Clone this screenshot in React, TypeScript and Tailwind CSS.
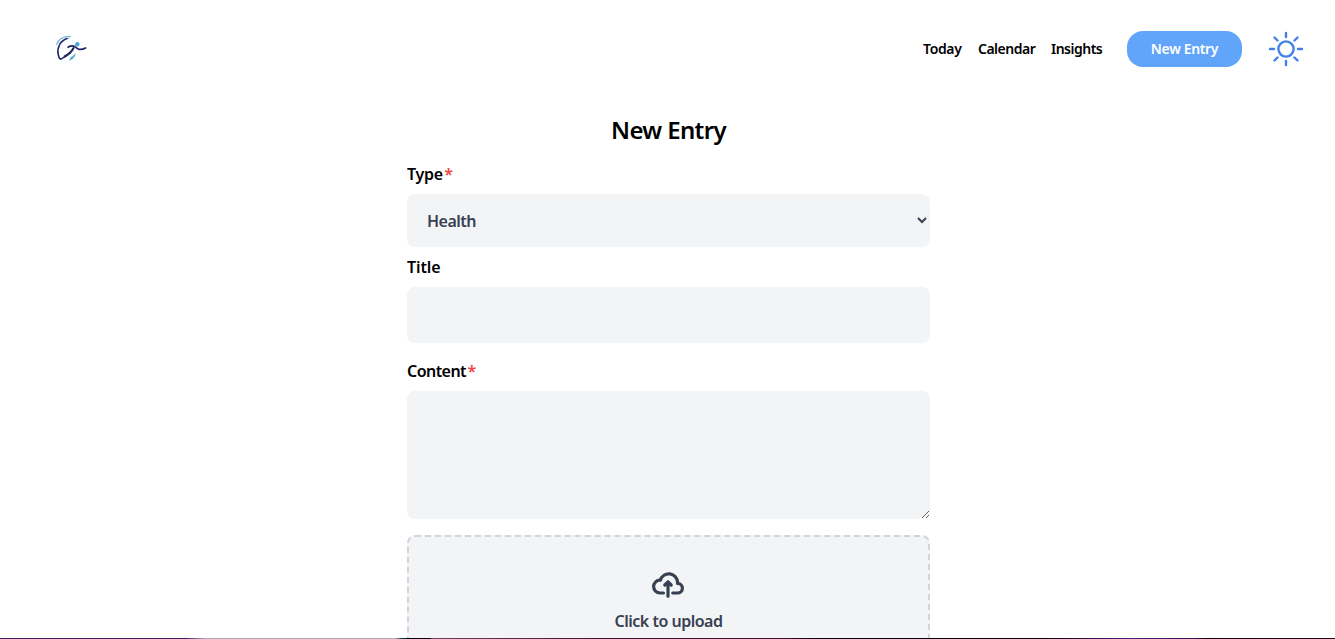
import React from "react";

function Logo() {
  return (
    <svg className="h-[30px] w-[32px]" viewBox="0 0 32 30" fill="none" strokeLinecap="round" strokeLinejoin="round">
      <path d="M1.500 10.500C3.500 5 8.500 2 15.500 2.300" stroke="#7db9d3" strokeWidth="1.200" />
      <path d="M4 9.500C6.500 6 10 4 14.500 4" stroke="#8fb9cc" strokeWidth="0.7" />
      <path d="M12 4.500C5 7 1.800 14 3.200 20.500c.5 2.400 1.100 4 2.300 4.700 2.800-1 6.500-3.400 9.700-6.200" stroke="#20286a" strokeWidth="1.600" />
      <path d="M9.500 22.400c3.500-1.800 7.300-4.700 9-8.400" stroke="#1d2560" strokeWidth="2" />
      <path d="M13 13.200c2-1.100 4.300-1.700 6.500-.8 2.200 1 2.600 2.700 5 3 2.300.2 4.300-.5 6-1.500" stroke="#1d2560" strokeWidth="1.700" />
      <circle cx="22.300" cy="10.200" r="2.200" fill="#4aa7cf" />
      <path d="M20.500 19c-1 2-3.500 3-5.200 4.400l-1.100 3.200c3-.8 6.600-3.600 6.300-7.600Z" fill="#5fb0d3" />
    </svg>
  );
}

function Sun() {
  return (
    <svg className="h-9 w-9" viewBox="-18 -18 36 36" fill="none" stroke="#4381ea" strokeWidth="2.400" strokeLinecap="round">
      <circle r="7.600" />
      <path d="M0-16v4M0 12v4M-16 0h4M12 0h4M-11.500-11.500l3 3M8.500 8.500l3 3M-11.500 11.500l3-3M8.500-8.500l3-3" />
    </svg>
  );
}

function Label({ text, required }: { text: string; required?: boolean }) {
  return (
    <span className="flex h-6 text-base leading-6 font-semibold text-black">
      <span className={text === "Content" ? "tracking-[-0.55px]" : text === "Type" ? "tracking-[-0.3px]" : "tracking-[-0.1px]"}>{text}</span>
      {required && <span className="ml-[1.5px] text-[#ef4444]">*</span>}
    </span>
  );
}

export default function App() {
  return (
    <div className="flex h-[639px] flex-col overflow-hidden bg-white font-['Noto_Sans',sans-serif] text-black">
      <header className="flex h-[98px] shrink-0 items-center justify-between pr-[31px] pl-[55px]">
        <Logo />
        <nav className="flex items-center text-sm font-semibold">
          <a className="mr-4 w-[39px] tracking-[-0.35px] whitespace-nowrap">Today</a>
          <a className="mr-4 w-[57px] tracking-[-0.5px] whitespace-nowrap">Calendar</a>
          <a className="mr-6 w-[52px] tracking-[-0.5px] whitespace-nowrap">Insights</a>
          <button className="mr-[26px] h-9 w-[115px] rounded-2xl bg-[#60a5fa] tracking-[-0.35px] text-white">New Entry</button>
          <Sun />
        </nav>
      </header>
      <main className="ml-[407px] flex h-[540px] w-[523px] shrink-0 flex-col overflow-hidden">
        <h1 className="mt-4 h-8 text-center text-2xl leading-8 font-semibold tracking-[-0.65px]">New Entry</h1>
        <div className="mt-4"><Label text="Type" required /></div>
        <select className="mt-2 h-[53px] w-full shrink-0 rounded-lg bg-[#f3f4f6] px-4 text-base font-semibold tracking-[-0.5px] text-[#374151]">
          <option>Health</option>
        </select>
        <div className="mt-2"><Label text="Title" /></div>
        <input className="mt-2 h-14 w-full shrink-0 rounded-lg bg-[#f3f4f6] px-5" />
        <div className="mt-4"><Label text="Content" required /></div>
        <textarea className="mt-2 h-32 w-full shrink-0 resize rounded-lg bg-[#f3f4f6] p-5" />
        <div className="mt-4 flex h-64 shrink-0 flex-col items-center rounded-lg border-2 border-dashed border-[#d1d5db] bg-[#f3f4f6] pt-8 text-[#374151]">
          <svg className="mr-px h-8 w-8" viewBox="0 0 20 16" fill="none" stroke="currentColor" strokeWidth="2" strokeLinecap="round" strokeLinejoin="round">
            <path d="M13 13h3a3 3 0 0 0 0-6h-.025A5.560 5.560 0 0 0 16 6.500 5.500 5.500 0 0 0 5.207 5.021C5.137 5.017 5.071 5 5 5a4 4 0 0 0 0 8h2.167M10 15V6m0 0L8 8m2-2 2 2" />
          </svg>
          <span className="mt-2 text-base leading-6 font-semibold tracking-[-0.5px]">Click to upload</span>
        </div>
      </main>
      <footer className="h-px shrink-0 bg-[linear-gradient(90deg,#3d1c5c_0px,#3d1c5c_185px,#aaa8b8_205px,#aaa8b0_395px,#0a526a_401px,#080010_408px,#080010_430px,#704060_432px,#401038_600px,#401038_780px,#05000d_820px,#080014_1040px,#49207b_1130px,#32134f_1195px,#16000c_1205px,#200818_1335px)]" />
    </div>
  );
}
